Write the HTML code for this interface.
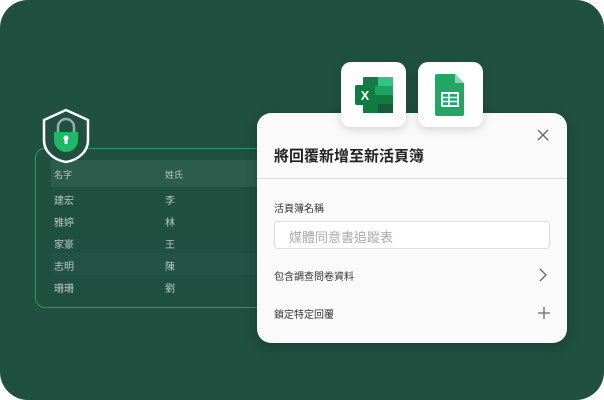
<!DOCTYPE html>
<html><head><meta charset="utf-8"><style>
*{margin:0;padding:0;box-sizing:border-box}
body{width:604px;height:400px;background:#fff;position:relative;overflow:hidden;font-family:"Liberation Sans","Noto Sans CJK TC",sans-serif}
.bg{position:absolute;left:0;top:0;width:604px;height:400px;background:#1f5040;border-radius:28px}
.tbl{position:absolute;left:35px;top:148px;width:240px;height:160px;border:1.5px solid #2a9a62;border-radius:10px}
.hdr{position:absolute;left:51px;top:160px;width:220px;height:27px;background:#2c5c4c}
.t{position:absolute;font-size:10px;color:#b8c9c2}
.dlg{position:absolute;left:257px;top:113px;width:310px;height:230px;background:#fafafa;border-radius:14px;box-shadow:0 4px 14px rgba(0,0,0,.2)}
.card{position:absolute;width:65px;height:65px;background:#fff;border-radius:10px;box-shadow:0 3px 10px rgba(0,0,0,.15)}
</style></head><body>
<div class="bg"></div>
<div class="tbl"></div>
<div class="hdr"></div>
<div style="position:absolute;left:51px;top:253px;width:220px;height:22px;background:#225344"></div>
<div class="t" style="left:54px;top:168px;font-size:9px">名字</div><div class="t" style="left:165px;top:168px;font-size:9px">姓氏</div>
<div class="t" style="left:54px;top:192px">建宏</div><div class="t" style="left:165px;top:192px">李</div>
<div class="t" style="left:54px;top:214px">雅婷</div><div class="t" style="left:165px;top:214px">林</div>
<div class="t" style="left:54px;top:236px">家豪</div><div class="t" style="left:165px;top:236px">王</div>
<div class="t" style="left:54px;top:258px">志明</div><div class="t" style="left:165px;top:258px">陳</div>
<div class="t" style="left:54px;top:280px">珊珊</div><div class="t" style="left:165px;top:280px">劉</div>
<svg style="position:absolute;left:40px;top:108px" width="52" height="56" viewBox="0 0 52 56">
<path d="M26 2 L48 12 V32 C48 44 38 52 26 54 C14 52 4 44 4 32 V12 Z" fill="#1f5040" stroke="#fff" stroke-width="2.5"/>
<path d="M18 24 V19 A8 8 0 0 1 34 19 V24" fill="none" stroke="#9aa" stroke-width="2.5"/>
<path d="M14 24 H38 V32 A12 12 0 0 1 14 32 Z" fill="#1fb865"/>
<rect x="24.5" y="30" width="3" height="6" fill="#fff"/><circle cx="26" cy="30" r="2.5" fill="#fff"/>
</svg>
<div class="dlg"></div>
<div class="card" style="left:341px;top:62px"></div>
<div class="card" style="left:418px;top:62px"></div>
<svg style="position:absolute;left:353px;top:75px" width="42" height="40" viewBox="0 0 42 40">
<rect x="10" y="2" width="30" height="36" rx="2" fill="#21a366"/>
<rect x="10" y="2" width="15" height="9" fill="#185c37" opacity=".6"/>
<rect x="25" y="2" width="15" height="9" fill="#33c481"/>
<rect x="25" y="20" width="15" height="9" fill="#107c41"/>
<rect x="10" y="20" width="15" height="18" fill="#107c41"/>
<rect x="25" y="29" width="15" height="9" fill="#185c37"/>
<rect x="2" y="10" width="20" height="20" rx="2" fill="#107c41"/>
<text x="12" y="25" font-size="13" font-weight="bold" fill="#fff" text-anchor="middle" font-family="Liberation Sans">X</text>
</svg>
<svg style="position:absolute;left:434px;top:73px" width="32" height="44" viewBox="0 0 32 44">
<path d="M3 1 H21 L30 10 V41 A2 2 0 0 1 28 43 H3 A2 2 0 0 1 1 41 V3 A2 2 0 0 1 3 1Z" fill="#23a566"/>
<path d="M21 1 L30 10 H21Z" fill="#8ed1b1"/>
<rect x="8" y="20" width="16" height="13" fill="none" stroke="#fff" stroke-width="2"/>
<path d="M8 24.5H24M8 28.5H24M15 20V33" stroke="#fff" stroke-width="1.6"/>
</svg>
<div style="position:absolute;left:274px;top:145px;font-size:15px;font-weight:bold;color:#222">將回覆新增至新活頁簿</div>
<svg style="position:absolute;left:537px;top:129px" width="12" height="12"><path d="M1 1L11 11M11 1L1 11" stroke="#666" stroke-width="1.3"/></svg>
<div style="position:absolute;left:257px;top:178px;width:310px;height:1px;background:#ddd"></div>
<div style="position:absolute;left:274px;top:200px;font-size:10px;color:#333">活頁簿名稱</div>
<div style="position:absolute;left:274px;top:221px;width:276px;height:28px;border:1px solid #ddd;border-radius:4px;background:#fff"></div>
<div style="position:absolute;left:289px;top:227px;font-size:13px;color:#aaa">媒體同意書追蹤表</div>
<div style="position:absolute;left:274px;top:268px;font-size:10px;color:#333">包含調查問卷資料</div>
<svg style="position:absolute;left:538px;top:268px" width="10" height="14"><path d="M2 1L8 7L2 13" fill="none" stroke="#666" stroke-width="1.3"/></svg>
<div style="position:absolute;left:274px;top:306px;font-size:10px;color:#333">鎖定特定回覆</div>
<svg style="position:absolute;left:538px;top:307px" width="12" height="12"><path d="M6 0V12M0 6H12" stroke="#666" stroke-width="1.3"/></svg>
</body></html>
